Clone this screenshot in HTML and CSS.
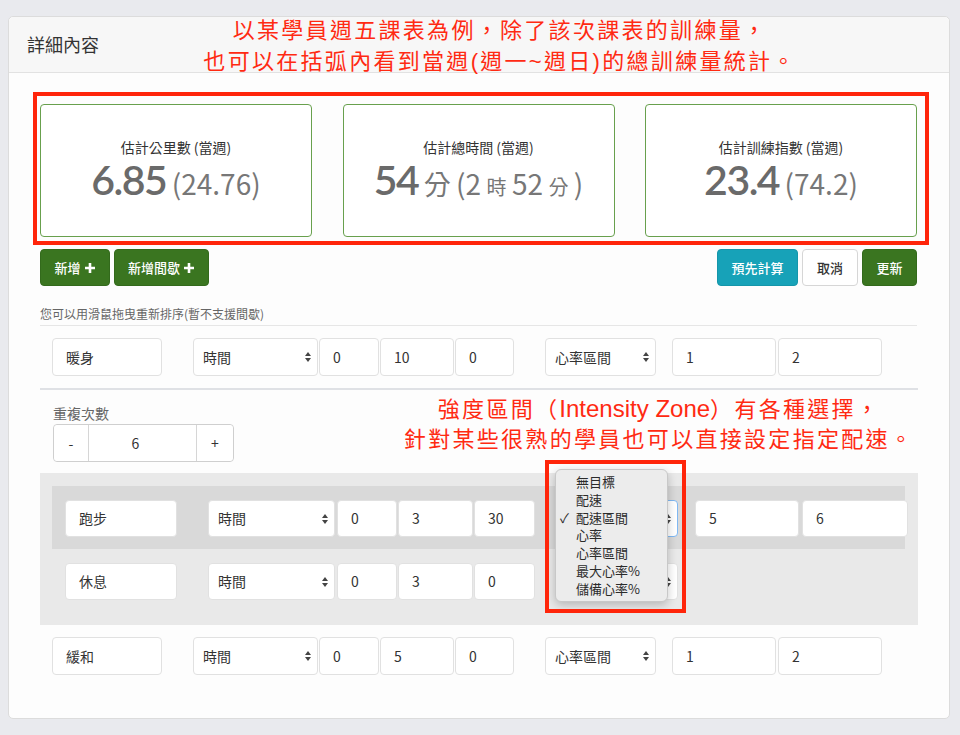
FILE: index.html
```html
<!DOCTYPE html>
<html lang="zh-Hant">
<head>
<meta charset="utf-8">
<title>詳細內容</title>
<link rel="stylesheet" href="styles.css">
</head>
<body>
<div class="card">
  <div class="card-header">詳細內容</div>
  <div class="card-body">
    <div class="note-box">
      <div class="stats">
        <div class="stat">
          <div class="stat-label">估計公里數 (當週)</div>
          <div class="stat-value"><span class="big">6.85</span> <span class="sub">(24.76)</span></div>
        </div>
        <div class="stat">
          <div class="stat-label">估計總時間 (當週)</div>
          <div class="stat-value"><span class="big">54</span> <span class="unit">分</span> <span class="sub">(2</span> <span class="unit-s">時</span> <span class="sub">52</span> <span class="unit-s">分</span> <span class="sub">)</span></div>
        </div>
        <div class="stat">
          <div class="stat-label">估計訓練指數 (當週)</div>
          <div class="stat-value"><span class="big">23.4</span> <span class="sub">(74.2)</span></div>
        </div>
      </div>
    </div>

    <div class="toolbar">
      <div class="btn-group">
        <button class="btn btn-green btn-add">新增<svg class="plus" viewBox="0 0 12 12"><path d="M6 1v10M1 6h10"/></svg></button>
        <button class="btn btn-green btn-add2">新增間歇<svg class="plus" viewBox="0 0 12 12"><path d="M6 1v10M1 6h10"/></svg></button>
      </div>
      <div class="btn-group">
        <button class="btn btn-teal btn-calc">預先計算</button>
        <button class="btn btn-light btn-cancel">取消</button>
        <button class="btn btn-green btn-update">更新</button>
      </div>
    </div>

    <div class="hint">您可以用滑鼠拖曳重新排序(暫不支援間歇)</div>

    <div class="row">
      <div class="field f-name">暖身</div>
      <div class="field select f-type"><span>時間</span><svg class="arrows" viewBox="0 0 6 12"><path d="M0 5L3 1L6 5ZM0 7L3 11L6 7Z"/></svg></div>
      <div class="field f-h">0</div>
      <div class="field f-m">10</div>
      <div class="field f-s">0</div>
      <div class="field select f-zone"><span>心率區間</span><svg class="arrows" viewBox="0 0 6 12"><path d="M0 5L3 1L6 5ZM0 7L3 11L6 7Z"/></svg></div>
      <div class="field f-lo">1</div>
      <div class="field f-hi">2</div>
    </div>

    <div class="interval">
      <div class="repeat">
        <div class="repeat-label">重複次數</div>
        <div class="stepper">
          <span class="step step-minus">-</span>
          <span class="step-value">6</span>
          <span class="step step-plus">+</span>
        </div>
      </div>
      <div class="interval-list">
        <div class="row irow drag">
          <div class="field f-name">跑步</div>
          <div class="field select f-type"><span>時間</span><svg class="arrows" viewBox="0 0 6 12"><path d="M0 5L3 1L6 5ZM0 7L3 11L6 7Z"/></svg></div>
          <div class="field f-h">0</div>
          <div class="field f-m">3</div>
          <div class="field f-s">30</div>
          <div class="field select f-zone focus"><span></span><svg class="arrows" viewBox="0 0 6 12"><path d="M0 5L3 1L6 5ZM0 7L3 11L6 7Z"/></svg></div>
          <div class="field f-lo">5</div>
          <div class="field f-hi">6</div>
        </div>
        <div class="row irow">
          <div class="field f-name">休息</div>
          <div class="field select f-type"><span>時間</span><svg class="arrows" viewBox="0 0 6 12"><path d="M0 5L3 1L6 5ZM0 7L3 11L6 7Z"/></svg></div>
          <div class="field f-h">0</div>
          <div class="field f-m">3</div>
          <div class="field f-s">0</div>
          <div class="field select f-zone"><span></span><svg class="arrows" viewBox="0 0 6 12"><path d="M0 5L3 1L6 5ZM0 7L3 11L6 7Z"/></svg></div>
        </div>
      </div>
    </div>

    <div class="row">
      <div class="field f-name">緩和</div>
      <div class="field select f-type"><span>時間</span><svg class="arrows" viewBox="0 0 6 12"><path d="M0 5L3 1L6 5ZM0 7L3 11L6 7Z"/></svg></div>
      <div class="field f-h">0</div>
      <div class="field f-m">5</div>
      <div class="field f-s">0</div>
      <div class="field select f-zone"><span>心率區間</span><svg class="arrows" viewBox="0 0 6 12"><path d="M0 5L3 1L6 5ZM0 7L3 11L6 7Z"/></svg></div>
      <div class="field f-lo">1</div>
      <div class="field f-hi">2</div>
    </div>
  </div>
</div>

<div class="annot annot-top">以某學員週五課表為例，除了該次課表的訓練量，<br>也可以在括弧內看到當週(週一~週日)的總訓練量統計。</div>
<div class="annot annot-zone">強度區間（<span class="latin">Intensity Zone</span>）有各種選擇，<br>針對某些很熟的學員也可以直接設定指定配速。</div>

<div class="menu">
  <div class="menu-item">無目標</div>
  <div class="menu-item">配速</div>
  <div class="menu-item checked"><span class="check">✓</span>配速區間</div>
  <div class="menu-item">心率</div>
  <div class="menu-item">心率區間</div>
  <div class="menu-item">最大心率%</div>
  <div class="menu-item">儲備心率%</div>
</div>
<div class="mark-box"></div>
</body>
</html>
```

FILE: styles.css
```css
* { box-sizing: border-box; }

html, body { margin: 0; }

body {
  position: relative;
  width: 960px;
  height: 735px;
  overflow: hidden;
  padding: 16px 10px 0 8px;
  background: #e9eaee;
  font-family: "Noto Sans CJK TC", "Noto Sans", sans-serif;
  color: #333;
}

.card {
  width: 942px;
  height: 703px;
  background: #fdfdfd;
  border: 1px solid #dcdcdc;
  border-radius: 5px;
}

.card-header {
  height: 56px;
  padding-left: 18px;
  background: #f7f7f7;
  border-bottom: 1px solid #e2e2e2;
  border-radius: 5px 5px 0 0;
  font-size: 18px;
  line-height: 55px;
  color: #333;
}

.card-body {
  padding: 19px 32px 0 31px;
}

/* annotation frame around stats */
.note-box {
  margin: 0 -12px 0 -7px;
  padding: 8px 8px 4px 3px;
  border: 4px solid #ff250a;
}

.stats {
  display: flex;
  justify-content: space-between;
}

.stat {
  width: 272px;
  height: 133px;
  padding-top: 32px;
  border: 1px solid #68a04d;
  border-radius: 4px;
  background: #fff;
  text-align: center;
}

.stat-label {
  font-size: 14px;
  line-height: 20px;
  color: #333;
}

.stat-value {
  margin-top: 2px;
  font-size: 24px;
  line-height: 41px;
  color: #6a6a6a;
  white-space: nowrap;
}

.big {
  font-family: Lato, "Noto Sans CJK TC", sans-serif;
  font-size: 41px;
  font-weight: 600;
  letter-spacing: -1.5px;
}

.sub {
  font-size: 28px;
  color: #777;
}

.unit {
  font-size: 27px;
  color: #777;
}

.unit-s {
  font-size: 20px;
  color: #777;
}

/* toolbar */
.toolbar {
  display: flex;
  justify-content: space-between;
  margin-top: 4px;
}

.btn-group {
  display: flex;
  gap: 4px;
}

.btn {
  display: inline-flex;
  align-items: center;
  justify-content: center;
  gap: 3px;
  height: 37px;
  padding: 0;
  border: 1px solid transparent;
  border-radius: 4px;
  font-family: inherit;
  font-size: 13px;
  font-weight: 500;
  line-height: 1;
}

.btn-green {
  background: #3a7520;
  border-color: #336a1c;
  color: #fff;
}

.btn-teal {
  background: #17a2b8;
  border-color: #1596aa;
  color: #fff;
}

.btn-light {
  background: #fff;
  border-color: #d6d6d6;
  color: #333;
}

.btn-add { width: 70px; }
.btn-add2 { width: 95px; }
.btn-calc { width: 81px; }
.btn-cancel { width: 56px; }
.btn-update { width: 55px; }

.plus {
  width: 12px;
  height: 12px;
  stroke: #fff;
  stroke-width: 2.6;
  fill: none;
}

.hint {
  margin-top: 19px;
  padding-bottom: 2px;
  border-bottom: 1px solid #e6e6e6;
  font-size: 12px;
  line-height: 18px;
  color: #666;
}

/* step rows */
.row {
  display: flex;
  margin-top: 12px;
  padding-left: 12px;
}

.field {
  flex: none;
  height: 38px;
  padding-left: 13px;
  border: 1px solid #e1e1e1;
  border-radius: 4px;
  background: #fff;
  font-size: 14px;
  line-height: 36px;
  color: #333;
  white-space: nowrap;
}

.select {
  display: flex;
  align-items: center;
  justify-content: space-between;
  padding: 0 6px 0 9px;
}

.arrows {
  width: 6px;
  height: 12px;
  fill: #444;
}

.f-name { width: 110px; }
.f-type { width: 125px; margin-left: 31px; }
.f-h { width: 60px; margin-left: 1px; }
.f-m { width: 74px; margin-left: 1px; }
.f-s { width: 59px; margin-left: 1px; }
.f-zone { width: 111px; margin-left: 31px; }
.f-lo { width: 104px; margin-left: 16px; }
.f-hi { width: 104px; margin-left: 2px; }

/* interval block */
.interval {
  margin-top: 12px;
  margin-right: -1px;
  border-top: 2px solid #dfe1e5;
}

.repeat {
  padding: 13px 0 11px 13px;
}

.repeat-label {
  margin-bottom: 1px;
  font-size: 14px;
  line-height: 20px;
  color: #666;
}

.stepper {
  display: flex;
  width: 181px;
  height: 38px;
  border: 1px solid #cfcfcf;
  border-radius: 4px;
  background: #fff;
  font-size: 14px;
  line-height: 36px;
  color: #333;
  text-align: center;
}

.step {
  width: 35px;
  background: #fff;
  color: #333;
}

.step-minus {
  border-right: 1px solid #d6d6d6;
  border-radius: 4px 0 0 4px;
}

.step-plus {
  width: 37px;
  border-left: 1px solid #d6d6d6;
  border-radius: 0 4px 4px 0;
}

.step-value {
  flex: 1;
  padding-right: 14px;
}

.interval-list {
  padding: 13px 13px 13px 12px;
  background: #e9e9e9;
}

.irow {
  margin-top: 0;
  padding: 14px 0 12px 13px;
}

.irow.drag {
  background: #d9d9d9;
}

.irow .field { height: 37px; line-height: 35px; }
.irow .f-name { width: 112px; }
.irow .f-type { width: 127px; }
.irow .f-h { margin-left: 2px; }
.irow .f-m { width: 75px; }
.irow .f-s { width: 61px; }
.irow .f-zone { width: 112px; }
.irow .f-lo { margin-left: 17px; }
.irow .f-hi { width: 106px; margin-left: 3px; }

.field.focus {
  border-color: #80b8f2;
}

/* annotations (overlay) */
.annot {
  position: absolute;
  width: 600px;
  font-family: "Liberation Sans", "Noto Sans CJK TC", sans-serif;
  font-size: 22px;
  letter-spacing: 2.3px;
  line-height: 31px;
  color: #ff2a12;
  text-align: center;
  white-space: nowrap;
}

.annot-top {
  left: 200px;
  top: 15px;
}

.annot-zone {
  left: 359px;
  top: 394px;
  line-height: 30px;
}

.latin {
  font-size: 24px;
  letter-spacing: 0;
}

/* native-like dropdown (overlay) */
.menu {
  position: absolute;
  left: 555px;
  top: 469px;
  width: 113px;
  height: 133px;
  padding: 3px 0 0 20px;
  background: #ececec;
  border: 1px solid #c8c8c8;
  border-radius: 6px;
  box-shadow: 0 3px 10px rgba(0, 0, 0, 0.22);
  font-size: 13px;
  line-height: 17.8px;
  color: #2b2b2b;
}

.menu-item {
  white-space: nowrap;
}

.check {
  display: inline-block;
  width: 16px;
  margin-left: -16px;
}

.mark-box {
  position: absolute;
  left: 545px;
  top: 460px;
  width: 141px;
  height: 153px;
  border: 4px solid #ff250a;
}
```
